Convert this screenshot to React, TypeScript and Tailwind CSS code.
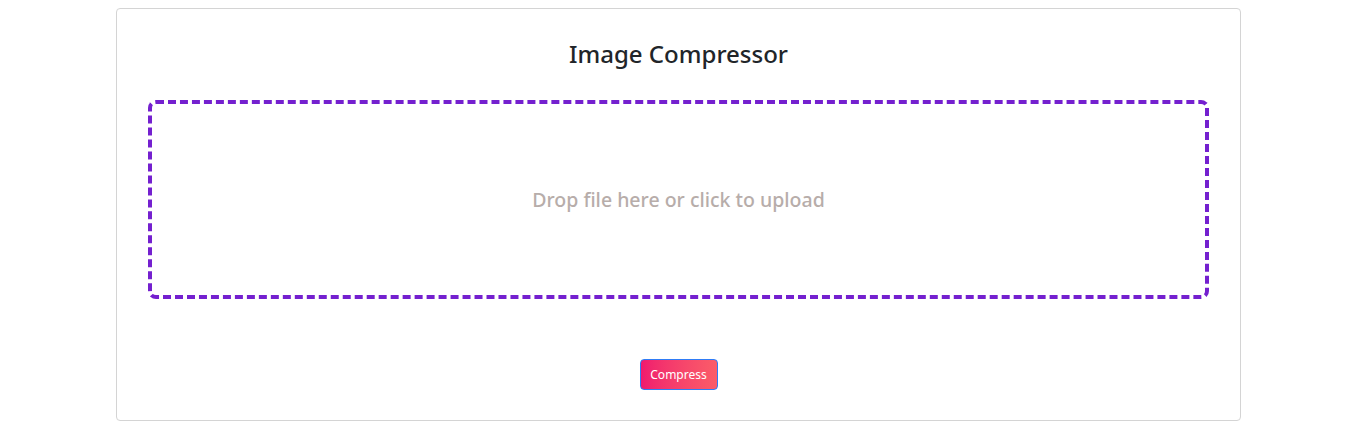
export default function App() {
  return (
    <div className="bg-white min-h-[429px] pt-2 font-['Noto_Sans',sans-serif]">
      <div className="ml-[116px] w-[1125px] h-[413px] rounded border border-[#d4d4d4] px-[31px] pt-[27px]">
        <h1 className="text-center text-[24px] font-medium text-[#212529] leading-[36px]">Image Compressor</h1>
        <div className="mt-[28px] flex h-[199px] items-center justify-center rounded-lg border-4 border-dashed border-[#7420cf] cursor-pointer">
          <p className="text-[19.5px] font-medium text-[#b7adaa]">Drop file here or click to upload</p>
        </div>
        <div className="mt-[60px] flex justify-center">
          <button
            type="button"
            className="h-[31px] w-[78px] rounded border border-[#2f7cf6] bg-gradient-to-r from-[#f0196e] to-[#fb5c68] text-[12px] text-white"
          >
            Compress
          </button>
        </div>
      </div>
    </div>
  );
}
